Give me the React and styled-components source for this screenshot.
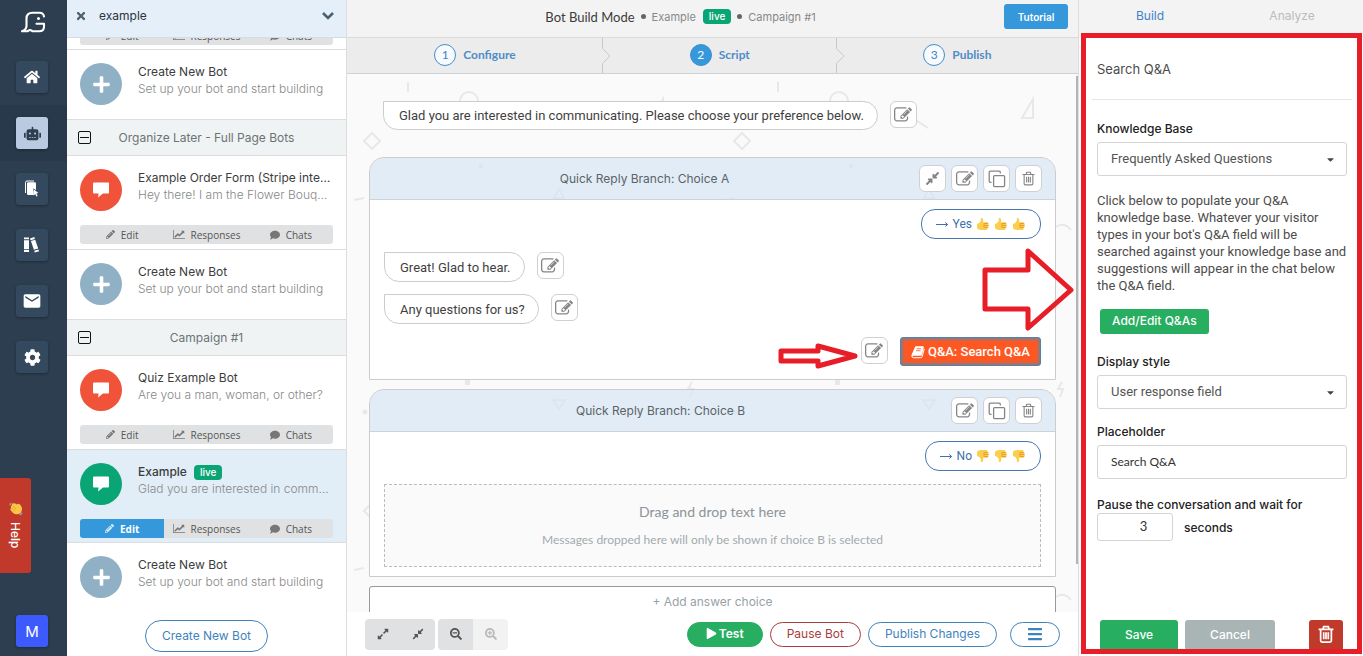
import React from 'react'
import styled, { createGlobalStyle } from 'styled-components'
import {
    FaHome, FaRobot, FaCog, FaTimes, FaPlus, FaPencilAlt, FaComment,
    FaCompressAlt, FaExpandAlt, FaSearchMinus, FaSearchPlus, FaPlay, FaBars, FaCaretDown,
} from 'react-icons/fa'
import { MdEmail } from 'react-icons/md'

const round = '"Inter", "Liberation Sans", sans-serif'
const body = '"Roboto", "Liberation Sans", sans-serif'
const lato = '"Lato", "Liberation Sans", sans-serif'

/* ---------- icons ---------- */

const EditIcon = () => (
    <svg viewBox="0 0 1792 1792" width="18" height="18" fill="currentColor" aria-hidden="true">
        <path d="M888 1184l116-116-152-152-116 116v56h96v96h56zm440-720q-16-16-33 1l-350 350q-17 17-1 33t33-1l350-350q17-17 1-33zm80 594v190q0 119-84.5 203.5t-203.5 84.5h-832q-119 0-203.5-84.5t-84.5-203.5v-832q0-119 84.5-203.5t203.5-84.5h832q63 0 117 25 15 7 18 23 3 17-9 29l-49 49q-14 14-32 8-23-6-45-6h-832q-66 0-113 47t-47 113v832q0 66 47 113t113 47h832q66 0 113-47t47-113v-126q0-13 9-22l64-64q15-15 35-7t20 29zm-96-738l288 288-672 672h-288v-288zm444 132l-92 92-288-288 92-92q28-28 68-28t68 28l152 152q28 28 28 68t-28 68z" />
    </svg>
)

const TrashIcon = ({ size = 14, weight = 1.2 }) => (
    <svg viewBox="0 0 14 16" width={size} height={size * 16 / 14} fill="none" stroke="currentColor" strokeWidth={weight} aria-hidden="true">
        <path d="M0.5 3.8h13M4.3 3.6L5 1.4h4l.7 2.2M2.3 4v9.6q0 1.4 1.3 1.4h6.8q1.3 0 1.3-1.4V4M5 6.3v6.2M7 6.3v6.2M9 6.3v6.2" />
    </svg>
)

const CopyIcon = () => (
    <svg viewBox="0 0 18 18" width="18" height="18" fill="none" stroke="currentColor" strokeWidth="1.3" aria-hidden="true">
        <rect x="5.6" y="5.6" width="11" height="11" rx="1" />
        <path d="M3.6 12.3H2.2q-1 0-1-1V2.2q0-1 1-1h9.1q1 0 1 1v1.4" />
    </svg>
)

const ChartIcon = () => (
    <svg viewBox="0 0 2048 1792" width="12" height="11" fill="currentColor" aria-hidden="true">
        <path d="M2048 1536v128h-2048v-1536h128v1408h1920zm-128-1248v435q0 21-19.5 29.5t-35.5-7.5l-121-121-633 633q-10 10-23 10t-23-10l-233-233-416 416-192-192 585-585q10-10 23-10t23 10l233 233 464-464-121-121q-16-16-7.5-35.5t29.5-19.5h435q14 0 23 9t9 23z" />
    </svg>
)

const BookIcon = () => (
    <svg viewBox="0 0 14 14" width="14" height="14" aria-hidden="true">
        <path d="M4.300 1.200h7.500q1.300 0 1 1.300l-1.900 7.300q-.3.900-1.300.9H2.400q-1.200 0-1.500.9Q.3 10.700.7 9.600z" fill="#fff" />
        <path d="M1 10.500q-.3 2.200 1.500 2.200h7.300q1 0 1.300-.9l2.200-8" fill="none" stroke="#fff" />
        <path d="M5.600 3.700h4.600M5 5.700h4.600" stroke="#ff5722" strokeWidth="0.800" />
    </svg>
)

const GhostLogo = () => (
    <svg viewBox="0 0 28 24" width="28" height="24" fill="none" stroke="#fff" strokeWidth="2.1" strokeLinecap="round" strokeLinejoin="round" aria-hidden="true">
        <path d="M26 6.500Q25.500 2.700 21.500 2.700H14.500C10.500 2.700 8.500 5 8.500 8.500v7.300c0 2.300-1.500 4.500-4.500 5.500h5c1.200 0 1.700-1.300 3-1.300s1.800 1.300 3 1.300h6c3.400 0 5-1.900 5-4.600v-3h-7.500" />
        <circle cx="20.500" cy="8.600" r="0.800" fill="#fff" strokeWidth="1.400" />
    </svg>
)

const PagesIcon = () => (
    <svg viewBox="0 0 16 18" width="16" height="18" aria-hidden="true">
        <path d="M1.500 13V2.500Q1.500 1 3 1h7" fill="none" stroke="#fff" strokeWidth="1" />
        <path d="M3 3.500Q3 2.300 4.200 2.300h6.600q1.200 0 1.200 1.200V10L9 8.600l1 6.400H4.200Q3 15 3 13.800z" fill="#fff" />
        <path d="M9.600 9.300l4.800 3.700-2 .4 1.300 2.600-1.300.6-1.200-2.600-1.500 1.400z" fill="#fff" />
    </svg>
)

const BooksIcon = () => (
    <svg viewBox="0 0 18 18" width="18" height="18" fill="#fff" aria-hidden="true">
        <path d="M1 1.500h5v1.800H1zM1 4.200h5v9H1zM1 14.100h5v2H1z" />
        <path d="M7 2.400l4.300-1.300.6 1.800-4.300 1.300zM7.900 5.100l4.300-1.300 3 8.700-4.300 1.300zM11.200 14.700l4.300-1.300.6 1.800-4.300 1.300z" />
    </svg>
)

const Thumb = ({ down }) => (
    <svg viewBox="0 0 14 14" width="14" height="14" aria-hidden="true">
        <g transform={down ? 'matrix(1 0 0 -1 0 14)' : undefined}>
            <path d="M1 7.500Q1.200 6.600 2.300 6.500 4.300 5.800 4.800 3.600V1.700Q5 .7 6 .9 7.300 1.400 7.300 3.400L7 5.300h4.300q1.200.2 1 1.400.7.700.2 1.700.5.900-.2 1.700.1 1-.8 1.400 0 1.300-1.300 1.400H5.300Q1.300 12.700 1 10.500z" fill="#fbcf4b" />
            <path d="M8 6.500h4.200M8.200 8.500h4.200M8.200 10.500h3.700M8 6.300v4.400" stroke="#e59a35" strokeWidth="0.900" fill="none" />
        </g>
    </svg>
)

const ArrowRight = () => (
    <svg viewBox="0 0 13 8" width="13" height="8" fill="none" stroke="currentColor" aria-hidden="true">
        <path d="M0 4.500h11.500M9.300 2.500l2.400 2-2.400 2" />
    </svg>
)

const Wave = () => (
    <svg viewBox="0 0 14 14" width="14" height="14" aria-hidden="true">
        <path d="M3.500 1.500Q6 .5 7.500 2.500q2-1.500 3.700.3 2.200 2.300 1.800 4.700-.3 3.500-3.600 4.600-3 .9-5.600-1.400L1.500 8Q.8 6.700 2.200 6.200 1.300 4.500 2.700 3.700 2.500 2.200 3.500 1.500z" fill="#fbc548" />
        <path d="M1 3.500Q.9 1.800 2.400 1M12.800 10.500q-.4 1.900-2.300 2.500" stroke="#9aa2ab" strokeWidth="1.300" fill="none" />
        <path d="M4 4l3 3M3.300 6.700L6 9.200" stroke="#e9a02f" fill="none" />
    </svg>
)

/* ---------- shell ---------- */

const Global = createGlobalStyle`
    * { box-sizing: border-box; }
    body { margin: 0; background: #fff; font-family: ${round}; color: #444; }
    button, input, select { font-family: inherit; margin: 0; }
    button { cursor: pointer; padding: 0; border: 0; background: none; color: inherit; }
    svg { display: block; flex: none; }
`

const Shell = styled.div`
    display: grid;
    grid-template-columns: 67px 280px minmax(0, 1fr) 284px;
    height: 100vh;
    overflow: hidden;
`

const Rail = styled.nav`
    position: relative;
    display: flex;
    flex-direction: column;
    background: #2c3e50;
    padding-bottom: 9px;
`
const LogoBox = styled.div`
    height: 49px;
    padding: 10px 0 0 18px;
`
const RailSlot = styled.div`
    height: 56px;
    display: flex;
    align-items: center;
    padding-left: 16px;
    background: ${props => props.$active ? '#27394a' : 'transparent'};
`
const RailButton = styled.button`
    width: 32px;
    height: 32px;
    border-radius: 3px;
    display: flex;
    align-items: center;
    justify-content: center;
    color: ${props => props.$active ? '#2c3e50' : '#fff'};
    background: ${props => props.$active ? '#b9cbe0' : '#34495e'};
    box-shadow: 0 1px 3px rgba(0, 0, 0, 0.3);
`
const UserButton = styled(RailButton)`
    margin: auto 0 0 16px;
    background: #3d5afe;
    font-size: 15px;
`
const HelpTab = styled.button`
    position: absolute;
    left: 0;
    bottom: 83px;
    width: 31px;
    height: 95px;
    display: flex;
    align-items: center;
    justify-content: center;
    gap: 6px;
    writing-mode: vertical-rl;
    background: #c0392b;
    color: #fff;
    font-size: 12px;
    font-weight: 500;
    border-radius: 0 3px 3px 0;
`

/* ---------- bot list ---------- */

const Sidebar = styled.aside`
    display: flex;
    flex-direction: column;
    min-height: 0;
    border-right: 1px solid #ddd;
`
const SearchBar = styled.div`
    flex: none;
    height: 38px;
    display: flex;
    align-items: center;
    padding: 0 12px 6px 8px;
    background: #e4effa;
    border-bottom: 1px solid #d5dde4;
    color: #4b6172;
`
const SearchInput = styled.input`
    flex: 1;
    min-width: 0;
    border: 0;
    outline: 0;
    background: none;
    padding: 0 12px;
    font-size: 12px;
    color: #2c3440;
`
const List = styled.div`
    flex: 1;
    min-height: 0;
    overflow: hidden;
    display: flex;
    flex-direction: column;
    justify-content: flex-end;
`
const Row = styled.div`
    flex: none;
    padding: 13px 13px 14px;
    border-top: 1px solid #ddd;
    background: #fff;
`
const TallRow = styled(Row)`
    padding-bottom: ${props => props.$active ? 4 : 5}px;
    background: ${props => props.$active ? '#e1eef7' : '#fff'};
`
const RowTop = styled.div`
    display: flex;
    gap: 16px;
    height: 42px;
`
const Avatar = styled.div`
    flex: none;
    width: 42px;
    height: 42px;
    border-radius: 50%;
    display: flex;
    align-items: center;
    justify-content: center;
    color: #fff;
    background: ${props => props.$color};
`
const RowText = styled.div`
    min-width: 0;
    line-height: 17px;
    font-size: 12px;
    > div {
        overflow: hidden;
        text-overflow: ellipsis;
        white-space: nowrap;
    }
`
const Name = styled.div`
    color: #3c3c3c;
    font-weight: ${props => props.$active ? 500 : 400};
`
const Sub = styled.div`
    color: #888;
    font-weight: 300;
`
const Live = styled.span`
    display: inline-block;
    margin: 0 0 0 7px;
    padding: 0 6px;
    border-radius: 4px;
    background: #0aa574;
    color: #fff;
    font-size: 10px;
    line-height: 15px;
    font-weight: 500;
`
const Actions = styled.div`
    flex: none;
    display: grid;
    grid-template-columns: repeat(3, 1fr);
    height: 19px;
    margin-top: 14px;
    background: #e0e1e2;
    border-radius: 3px;
    overflow: hidden;
`
const PeekActions = styled(Actions)`
    margin: 0 13px 4px;
`
const Action = styled.button`
    display: flex;
    align-items: center;
    justify-content: center;
    gap: 6px;
    font-family: "Open Sans", sans-serif;
    font-size: 10px;
    font-weight: ${props => props.$active ? 700 : 400};
    color: ${props => props.$active ? '#fff' : '#555'};
    background: ${props => props.$active ? '#3498db' : 'transparent'};
    svg {
        color: ${props => props.$active ? '#d5e9f7' : '#777'};
    }
`
const Group = styled.div`
    flex: none;
    height: 36px;
    display: flex;
    align-items: center;
    padding: 0 24px 0 11px;
    border-top: 1px solid #ddd;
    background: #f0f3f3;
    font-size: 12px;
    color: #6b7377;
    > span {
        flex: 1;
        text-align: center;
    }
`
const Collapse = styled.button`
    width: 13px;
    height: 13px;
    border: 1px solid #111;
    border-radius: 2px;
    display: flex;
    align-items: center;
    justify-content: center;
    &::after {
        content: '';
        width: 9px;
        height: 1px;
        background: #111;
    }
`
const SidebarFoot = styled.div`
    flex: none;
    height: 44px;
    display: flex;
    justify-content: center;
    align-items: flex-start;
    padding-top: 8px;
`
const Pill = styled.button`
    height: ${props => props.$tall ? 32 : 25}px;
    display: flex;
    align-items: center;
    justify-content: center;
    gap: 2px;
    padding: 0 ${props => props.$filled ? 18 : 16}px 1px;
    white-space: nowrap;
    border-radius: 16px;
    border: 1px solid ${props => props.$color};
    color: ${props => props.$filled ? '#fff' : props.$color};
    background: ${props => props.$filled ? props.$color : '#fff'};
    font-size: 12px;
    font-weight: ${props => props.$filled ? 600 : 400};
`

/* ---------- builder ---------- */

const Builder = styled.main`
    display: flex;
    flex-direction: column;
    min-width: 0;
    min-height: 0;
    border-right: 1px solid #ddd;
`
const TopBar = styled.header`
    flex: none;
    height: 38px;
    display: grid;
    grid-template-columns: 1fr 64px;
    align-items: center;
    padding: 0 10px 4px;
    background: #f3f3f3;
    border-bottom: 1px solid #d9dcdf;
`
const Crumbs = styled.div`
    display: flex;
    align-items: center;
    justify-content: center;
    font-size: 11px;
    color: #888;
`
const Mode = styled.h1`
    margin: 0;
    font-family: ${lato};
    font-size: 13px;
    font-weight: 400;
    color: #3c3c3c;
`
const Dot = styled.i`
    width: 5px;
    height: 5px;
    margin: 0 6px;
    border-radius: 50%;
    background: #666;
`
const Tutorial = styled.button`
    height: 25px;
    border-radius: 3px;
    background: #3498db;
    color: #fff;
    font-size: 10px;
    font-weight: 600;
`
const Steps = styled.ol`
    flex: none;
    display: grid;
    grid-template-columns: 35fr 32fr 33fr;
    height: 36px;
    margin: 0;
    padding: 0;
    list-style: none;
    background: #ececec;
    border-bottom: 1px solid #ccd2d6;
`
const Step = styled.li`
    position: relative;
    display: flex;
    align-items: center;
    justify-content: center;
    gap: 7px;
    padding-bottom: 2px;
    font-family: ${lato};
    font-size: 12px;
    font-weight: 700;
    color: #4f8dc7;
    > svg {
        position: absolute;
        right: -8px;
        top: 0;
    }
`
const StepNumber = styled.span`
    width: 22px;
    height: 22px;
    border-radius: 50%;
    border: 1px solid #3f8fcd;
    display: flex;
    align-items: center;
    justify-content: center;
    font-weight: 400;
    color: ${props => props.$active ? '#fff' : '#4183c4'};
    background: ${props => props.$active ? '#3498db' : '#f8fbfd'};
`
const Canvas = styled.section`
    position: relative;
    flex: 1;
    min-height: 0;
    overflow: hidden;
    background: #fafafa;
`
const Backdrop = styled.svg`
    position: absolute;
    inset: 0;
    width: 100%;
    height: 100%;
`
const Flow = styled.div`
    position: relative;
    padding: 27px 22px 0;
`
const ScrollThumb = styled.div`
    position: absolute;
    right: 0;
    top: 2px;
    bottom: 48px;
    width: 2px;
    background: #b5b5b5;
`
const Line = styled.div`
    position: relative;
    display: flex;
    align-items: flex-start;
    gap: 12px;
    margin-bottom: ${props => props.$right ? 13 : 12}px;
    padding-left: ${props => props.$inset ? 14 : 0}px;
    justify-content: ${props => props.$right ? 'flex-end' : 'flex-start'};
`
const Bubble = styled.div`
    height: ${props => props.$low ? 29 : 30}px;
    display: flex;
    align-items: center;
    padding: 0 13px 0 15px;
    border: 1px solid #ccc;
    border-radius: 0 15px 15px 15px;
    background: #fff;
    font-family: ${body};
    font-size: 13px;
    color: #3f3f3f;
    white-space: nowrap;
`
const IconButton = styled.button`
    flex: none;
    width: 27px;
    height: 27px;
    display: flex;
    align-items: center;
    justify-content: center;
    border: 1px solid #d0d0d0;
    border-radius: 6px;
    background: #fff;
    color: #858585;
`
const BranchList = styled.div`
    padding-top: 15px;
`
const Branch = styled.article`
    margin-bottom: 9px;
    border: 1px solid #ccc;
    border-radius: 15px 15px 0 0;
`
const BranchHead = styled.header`
    height: 42px;
    display: flex;
    align-items: center;
    padding-right: 13px;
    background: rgba(213, 230, 244, 0.7);
    border-bottom: 1px solid #ccd2d6;
    border-radius: 14px 14px 0 0;
    h2 {
        flex: 1;
        margin: 0;
        text-align: center;
        font-size: 12px;
        font-weight: 400;
        color: #5b6368;
    }
`
const Tools = styled.div`
    display: flex;
    gap: 5px;
`
const BranchBody = styled.div`
    display: flow-root;
    padding: 9px 14px ${props => props.$drop ? 9 : 0}px;
    background: #fff;
`
const Reply = styled.div`
    height: 30px;
    display: flex;
    align-items: center;
    gap: 4px;
    padding: 0 14px;
    border: 1px solid #4877b0;
    border-radius: 14px;
    background: #fff;
    color: #4070ad;
    font-family: ${body};
    font-size: 12px;
`
const QaButton = styled.button`
    height: 29px;
    display: flex;
    align-items: center;
    gap: 3px;
    padding: 0 10px;
    border: 1px solid #4f83b0;
    border-radius: 3px;
    box-shadow: inset 0 0 3px 2px #8a7a80;
    background: #ff5722;
    color: #fff;
    font-family: ${body};
    font-size: 13px;
    font-weight: 500;
`
const QaLine = styled(Line)`
    margin-top: 13px;
`
const SmallArrow = styled.svg`
    position: absolute;
    right: 183px;
    top: 6px;
`
const BigArrow = styled.svg`
    position: absolute;
    right: 3px;
    top: 173px;
`
const DropZone = styled.div`
    height: 83px;
    margin-top: 13px;
    display: flex;
    flex-direction: column;
    align-items: center;
    justify-content: center;
    gap: 11px;
    border: 1px dashed #bbb;
    background: #fafafa;
    font-family: ${lato};
    font-size: 12px;
    line-height: 17px;
    color: #a2aaae;
    strong {
        font-size: 14px;
        font-weight: 400;
        color: #8b9498;
    }
`
const AddChoice = styled.button`
    width: 100%;
    height: 44px;
    padding-bottom: 14px;
    border: 1px solid #999;
    border-radius: 3px;
    background: #fff;
    color: #98a2a6;
    font-size: 12px;
`
const Footer = styled.footer`
    flex: none;
    height: 44px;
    display: flex;
    align-items: center;
    gap: 7px;
    padding: 0 18px;
    background: #fff;
`
const Zoom = styled.div`
    display: flex;
    margin-right: ${props => props.$last ? 'auto' : '-4px'};
    border-radius: 4px;
    overflow: hidden;
`
const ZoomButton = styled.button`
    width: 35px;
    height: 31px;
    display: flex;
    align-items: center;
    justify-content: center;
    background: #e0e1e2;
    color: #555;
    &:disabled {
        background: #f2f2f2;
        color: #b9b9b9;
    }
`
const MenuPill = styled(Pill)`
    margin-left: 6px;
`

/* ---------- settings panel ---------- */

const Panel = styled.aside`
    position: relative;
    display: flex;
    flex-direction: column;
    min-height: 0;
    background: #fff;
`
const Tabs = styled.div`
    flex: none;
    display: grid;
    grid-template-columns: 1fr 1fr;
    height: 38px;
    background: #f3f3f3;
`
const Tab = styled.button`
    padding-bottom: 8px;
    font-size: 12px;
    color: ${props => props.$active ? '#4183c4' : '#bcbcbc'};
`
const PanelTitle = styled.h2`
    height: 62px;
    margin: 0 11px 20px 13px;
    padding-left: 5px;
    display: flex;
    align-items: center;
    border-bottom: 1px solid #e6e6e6;
    font-size: 13px;
    font-weight: 400;
    color: #4c4c4c;
`
const Form = styled.form`
    flex: 1;
    min-height: 0;
    padding: 0 16px 0 18px;
`
const Label = styled.label`
    display: block;
    margin-bottom: ${props => props.$tight ? 0 : 5}px;
    font-size: 12px;
    line-height: 17px;
    font-weight: 500;
    color: #222;
`
const SelectWrap = styled.div`
    position: relative;
    margin-bottom: ${props => props.$wide ? 16 : 14}px;
    svg {
        position: absolute;
        right: 11px;
        top: 12px;
        color: #444;
        pointer-events: none;
    }
`
const Select = styled.select`
    width: 100%;
    height: 34px;
    appearance: none;
    padding: 0 13px 2px;
    border: 1px solid #d4d4d5;
    border-radius: 3px;
    background: #fff;
    color: #555;
    font-family: ${body};
    font-size: 13px;
`
const TextInput = styled.input`
    width: 100%;
    height: 34px;
    margin-bottom: 17px;
    padding: 0 13px 2px;
    border: 1px solid #d4d4d5;
    border-radius: 3px;
    color: #333;
    font-family: ${lato};
    font-size: 12px;
`
const Hint = styled.p`
    margin: 0 0 15px;
    font-family: ${body};
    font-size: 13px;
    line-height: 17px;
    color: #4c4c4c;
`
const SolidButton = styled.button`
    height: ${props => props.$small ? 25 : 31}px;
    padding: 0 ${props => props.$small ? 12 : 25}px 2px;
    margin-left: 3px;
    border-radius: 3px;
    background: ${props => props.$color};
    color: #fff;
    font-size: 12px;
    font-weight: 500;
`
const Spaced = styled.div`
    margin-bottom: 19px;
`
const Wait = styled.div`
    display: flex;
    align-items: center;
    gap: 11px;
    font-size: 12px;
    font-weight: 500;
    color: #222;
`
const WaitInput = styled.input`
    width: 76px;
    height: 28px;
    padding: 0 0 2px 32px;
    text-align: center;
    border: 1px solid #d4d4d5;
    border-radius: 3px;
    font-family: ${lato};
    font-size: 13px;
    color: #333;
`
const PanelFoot = styled.div`
    display: flex;
    gap: 4px;
    padding: 0 20px 5px 18px;
`
const DeleteButton = styled.button`
    width: 34px;
    height: 31px;
    margin-left: auto;
    padding-bottom: 3px;
    display: flex;
    align-items: center;
    justify-content: center;
    border-radius: 3px;
    background: #c0392b;
    color: #fff;
`
const Outline = styled.div`
    position: absolute;
    inset: 33px 1px 2px 2px;
    border: 5px solid #e71d27;
    pointer-events: none;
`

/* ---------- pieces ---------- */

const ChatAvatarIcon = () => (
    <svg viewBox="0 0 18 18" width="18" height="18" fill="#fff" aria-hidden="true">
        <path d="M2 1.500h14q1 0 1 1v9q0 1-1 1h-5L6 16.500l.6-4H2q-1 0-1-1v-9q0-1 1-1z" />
    </svg>
)

const ActionButtons = ({ active }) => (
    <>
        <Action $active={active}><FaPencilAlt size={9} />Edit</Action>
        <Action><ChartIcon />Responses</Action>
        <Action><FaComment size={10} />Chats</Action>
    </>
)

const BotRow = ({ name, text, color, active }) => (
    <TallRow $active={active}>
        <RowTop>
            <Avatar $color={color}><ChatAvatarIcon /></Avatar>
            <RowText>
                <Name $active={active}>{name}{active && <Live>live</Live>}</Name>
                <Sub>{text}</Sub>
            </RowText>
        </RowTop>
        <Actions><ActionButtons active={active} /></Actions>
    </TallRow>
)

const CreateRow = () => (
    <Row>
        <RowTop>
            <Avatar $color="#8fb0c5"><FaPlus size={19} /></Avatar>
            <RowText>
                <Name>Create New Bot</Name>
                <Sub>Set up your bot and start building</Sub>
            </RowText>
        </RowTop>
    </Row>
)

const GroupRow = ({ title }) => (
    <Group>
        <Collapse aria-label="Collapse group" />
        <span>{title}</span>
    </Group>
)

const Edit = () => <IconButton aria-label="Edit"><EditIcon /></IconButton>

const Chevron = () => (
    <svg viewBox="0 0 9 35" width="9" height="35" fill="none" stroke="#c5c9cc" aria-hidden="true">
        <path d="M.5 0v10.500L8 18 .5 25.500V35" />
    </svg>
)

const Doodles = () => (
    <Backdrop aria-hidden="true">
        <defs>
            <pattern id="doodles" width="370" height="370" patternUnits="userSpaceOnUse">
                <g fill="none" stroke="#e8e8e8" strokeWidth="2">
                    <path d="M61 8v10M25 59l8 8-8 8-8-8zM7 126l10-2M197 45l14 9M316 25v19h-11zM207 124l5-9 5 9zM206 326h12l-6 9z" />
                    <circle cx="122" cy="27" r="9" />
                    <path d="M336 155q10-9 18 1M345 308l-4 7h5l-3 8" />
                </g>
                <g fill="#e8e8e8">
                    <rect x="132" y="90" width="4" height="4" />
                    <rect x="118" y="306" width="5" height="5" />
                    <circle cx="18" cy="338" r="2.500" />
                </g>
            </pattern>
        </defs>
        <rect width="100%" height="100%" fill="url(#doodles)" />
    </Backdrop>
)

const Branches = () => (
    <BranchList>
        <Branch>
            <BranchHead>
                <h2>Quick Reply Branch: Choice A</h2>
                <Tools>
                    <IconButton aria-label="Collapse"><FaCompressAlt size={15} /></IconButton>
                    <Edit />
                    <IconButton aria-label="Duplicate"><CopyIcon /></IconButton>
                    <IconButton aria-label="Delete"><TrashIcon size={13} /></IconButton>
                </Tools>
            </BranchHead>
            <BranchBody>
                <Line $right>
                    <Reply><ArrowRight />Yes <Thumb /><Thumb /><Thumb /></Reply>
                </Line>
                <Line><Bubble>Great! Glad to hear.</Bubble><Edit /></Line>
                <Line><Bubble>Any questions for us?</Bubble><Edit /></Line>
                <QaLine $right>
                    <SmallArrow viewBox="0 0 80 26" width="80" height="26" fill="none" stroke="#e71d27" strokeWidth="5" strokeLinejoin="round">
                        <path d="M3 8h37V3l37 10-37 10v-5H3z" />
                    </SmallArrow>
                    <Edit />
                    <QaButton><BookIcon />Q&amp;A: Search Q&amp;A</QaButton>
                </QaLine>
            </BranchBody>
        </Branch>
        <Branch>
            <BranchHead>
                <h2>Quick Reply Branch: Choice B</h2>
                <Tools>
                    <Edit />
                    <IconButton aria-label="Duplicate"><CopyIcon /></IconButton>
                    <IconButton aria-label="Delete"><TrashIcon size={13} /></IconButton>
                </Tools>
            </BranchHead>
            <BranchBody $drop>
                <Line $right>
                    <Reply><ArrowRight />No <Thumb down /><Thumb down /><Thumb down /></Reply>
                </Line>
                <DropZone>
                    <strong>Drag and drop text here</strong>
                    <span>Messages dropped here will only be shown if choice B is selected</span>
                </DropZone>
            </BranchBody>
        </Branch>
    </BranchList>
)

const Settings = () => (
    <Panel>
        <Tabs>
            <Tab $active>Build</Tab>
            <Tab>Analyze</Tab>
        </Tabs>
        <PanelTitle>Search Q&amp;A</PanelTitle>
        <Form>
            <Label htmlFor="kb">Knowledge Base</Label>
            <SelectWrap $wide>
                <Select id="kb"><option>Frequently Asked Questions</option></Select>
                <FaCaretDown size={11} />
            </SelectWrap>
            <Hint>
                Click below to populate your Q&amp;A knowledge base. Whatever your visitor types in your bot's Q&amp;A field will be searched against your knowledge base and suggestions will appear in the chat below the Q&amp;A field.
            </Hint>
            <Spaced>
                <SolidButton type="button" $small $color="#27ae60">Add/Edit Q&amp;As</SolidButton>
            </Spaced>
            <Label htmlFor="display">Display style</Label>
            <SelectWrap>
                <Select id="display"><option>User response field</option></Select>
                <FaCaretDown size={11} />
            </SelectWrap>
            <Label htmlFor="placeholder">Placeholder</Label>
            <TextInput id="placeholder" defaultValue="Search Q&A" />
            <Label $tight htmlFor="wait">Pause the conversation and wait for</Label>
            <Wait>
                <WaitInput id="wait" type="number" defaultValue="3" />
                seconds
            </Wait>
        </Form>
        <PanelFoot>
            <SolidButton $color="#27ae60">Save</SolidButton>
            <SolidButton $color="#a9b5b5">Cancel</SolidButton>
            <DeleteButton aria-label="Delete"><TrashIcon size={16} weight={1.5} /></DeleteButton>
        </PanelFoot>
        <Outline />
    </Panel>
)

const railItems = [
    { label: 'Home', icon: <FaHome size={16} /> },
    { label: 'Bots', icon: <FaRobot size={17} />, active: true },
    { label: 'Pages', icon: <PagesIcon /> },
    { label: 'Library', icon: <BooksIcon /> },
    { label: 'Mail', icon: <MdEmail size={20} /> },
    { label: 'Settings', icon: <FaCog size={17} /> },
]

export default function App() {
    return (
        <Shell>
            <Global />
            <Rail>
                <LogoBox><GhostLogo /></LogoBox>
                {railItems.map(item => (
                    <RailSlot key={item.label} $active={item.active}>
                        <RailButton $active={item.active} aria-label={item.label}>{item.icon}</RailButton>
                    </RailSlot>
                ))}
                <UserButton>M</UserButton>
                <HelpTab><Wave />Help</HelpTab>
            </Rail>

            <Sidebar>
                <SearchBar>
                    <button aria-label="Clear search"><FaTimes size={12} /></button>
                    <SearchInput aria-label="Search bots" defaultValue="example" />
                    <svg viewBox="0 0 12 9" width="12" height="9" fill="none" stroke="currentColor" strokeWidth="2.600" aria-hidden="true">
                        <path d="M1 2l5 5 5-5" />
                    </svg>
                </SearchBar>
                <List>
                    <PeekActions><ActionButtons /></PeekActions>
                    <CreateRow />
                    <GroupRow title="Organize Later - Full Page Bots" />
                    <BotRow name="Example Order Form (Stripe integration)" text="Hey there! I am the Flower Bouquet bot" color="#f1523a" />
                    <CreateRow />
                    <GroupRow title="Campaign #1" />
                    <BotRow name="Quiz Example Bot" text="Are you a man, woman, or other?" color="#f1523a" />
                    <BotRow active name="Example" text="Glad you are interested in communicating" color="#0aa574" />
                    <CreateRow />
                </List>
                <SidebarFoot>
                    <Pill $tall $color="#3f83bd">Create New Bot</Pill>
                </SidebarFoot>
            </Sidebar>

            <Builder>
                <TopBar>
                    <Crumbs>
                        <Mode>Bot Build Mode</Mode>
                        <Dot />
                        Example<Live>live</Live>
                        <Dot />
                        Campaign #1
                    </Crumbs>
                    <Tutorial>Tutorial</Tutorial>
                </TopBar>
                <Steps>
                    <Step><StepNumber>1</StepNumber>Configure<Chevron /></Step>
                    <Step><StepNumber $active>2</StepNumber>Script<Chevron /></Step>
                    <Step><StepNumber>3</StepNumber>Publish</Step>
                </Steps>
                <Canvas>
                    <Doodles />
                    <Flow>
                        <Line $inset>
                            <Bubble $low>Glad you are interested in communicating. Please choose your preference below.</Bubble>
                            <Edit />
                        </Line>
                        <Branches />
                        <AddChoice>+ Add answer choice</AddChoice>
                    </Flow>
                    <BigArrow viewBox="0 0 94 84" width="94" height="84" fill="none" stroke="#e71d27" strokeWidth="5" strokeLinejoin="round">
                        <path d="M4 23h43V4l43 39-43 38V62H4z" />
                    </BigArrow>
                    <ScrollThumb />
                </Canvas>
                <Footer>
                    <Zoom>
                        <ZoomButton aria-label="Expand"><FaExpandAlt size={12} /></ZoomButton>
                        <ZoomButton aria-label="Collapse"><FaCompressAlt size={12} /></ZoomButton>
                    </Zoom>
                    <Zoom $last>
                        <ZoomButton aria-label="Zoom out"><FaSearchMinus size={12} /></ZoomButton>
                        <ZoomButton aria-label="Zoom in" disabled><FaSearchPlus size={12} /></ZoomButton>
                    </Zoom>
                    <Pill $filled $color="#27ae60"><FaPlay size={11} />Test</Pill>
                    <Pill $color="#a93c3c">Pause Bot</Pill>
                    <Pill $color="#3f83bd">Publish Changes</Pill>
                    <MenuPill $color="#3f83bd" aria-label="Menu"><FaBars size={16} /></MenuPill>
                </Footer>
            </Builder>

            <Settings />
        </Shell>
    )
}
